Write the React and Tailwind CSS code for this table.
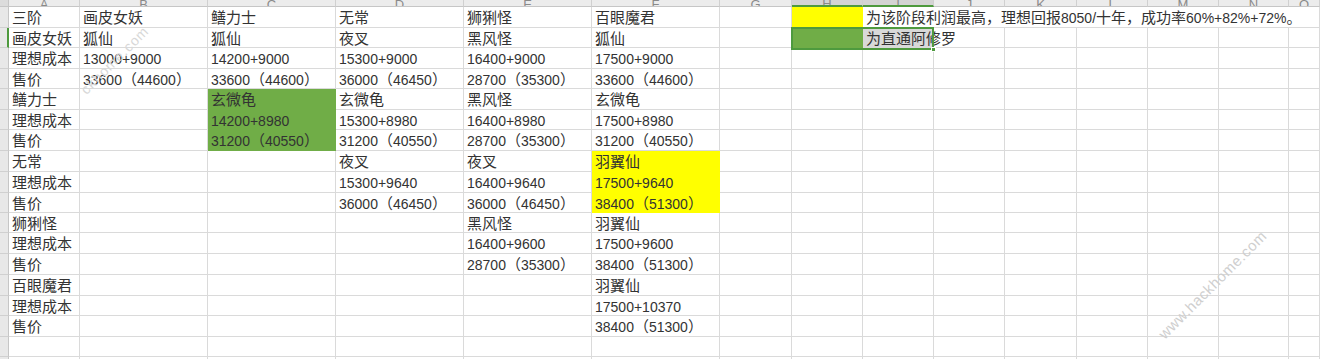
import React from "react";

const FONT = { fontFamily: '"Liberation Sans", "Noto Sans CJK SC", sans-serif' };

const COLS = ["A", "B", "C", "D", "E", "F", "G", "H", "I", "J", "K", "L", "M", "N", "O"];

// rows 1-16, columns A-F
const DATA = [
  ["三阶", "画皮女妖", "鳝力士", "无常", "狮猁怪", "百眼魔君"],
  ["画皮女妖", "狐仙", "狐仙", "夜叉", "黑风怪", "狐仙"],
  ["理想成本", "13000+9000", "14200+9000", "15300+9000", "16400+9000", "17500+9000"],
  ["售价", "33600（44600）", "33600（44600）", "36000（46450）", "28700（35300）", "33600（44600）"],
  ["鳝力士", "", "玄微龟", "玄微龟", "黑风怪", "玄微龟"],
  ["理想成本", "", "14200+8980", "15300+8980", "16400+8980", "17500+8980"],
  ["售价", "", "31200（40550）", "31200（40550）", "28700（35300）", "31200（40550）"],
  ["无常", "", "", "夜叉", "夜叉", "羽翼仙"],
  ["理想成本", "", "", "15300+9640", "16400+9640", "17500+9640"],
  ["售价", "", "", "36000（46450）", "36000（46450）", "38400（51300）"],
  ["狮猁怪", "", "", "", "黑风怪", "羽翼仙"],
  ["理想成本", "", "", "", "16400+9600", "17500+9600"],
  ["售价", "", "", "", "28700（35300）", "38400（51300）"],
  ["百眼魔君", "", "", "", "", "羽翼仙"],
  ["理想成本", "", "", "", "", "17500+10370"],
  ["售价", "", "", "", "", "38400（51300）"],
];

const CJK = /([\u3000-\u303f\u4e00-\u9fff\uff00-\uffef]+)/;

function Txt({ s }) {
  return s.split(CJK).map((p, i) =>
    CJK.test(p) ? (
      <span key={i} className="text-[15px]">{p}</span>
    ) : (
      p
    )
  );
}

function fillFor(r, c) {
  // r: 1-based row, c: 0-based column index (A=0)
  if (c === 2 && r >= 5 && r <= 7) return "bg-[#70ad47] border-[#70ad47]";
  if (c === 5 && r >= 8 && r <= 10) return "bg-[#ffff00] border-[#ffff00]";
  if (c === 7 && r === 1) return "bg-[#ffff00] border-[#ffff00]";
  if (c === 7 && r === 2) return "bg-[#70ad47] border-[#70ad47]";
  if (c === 8 && r === 2) return "bg-[#d9d9d9] border-[#d9d9d9]";
  return "border-[#dadada]";
}

function Cell({ r, c, text, className = "" }) {
  return (
    <div
      className={`flex items-center pt-[3px] pl-[3px] border-r border-b whitespace-nowrap text-[14px] text-[#333] overflow-visible ${fillFor(r, c)} ${className}`}
    >
      {text ? <Txt s={text} /> : null}
    </div>
  );
}

export default function App() {
  const rows = [];
  for (let r = 1; r <= 18; r++) {
    const cells = [];
    cells.push(
      <div
        key="h"
        className={`bg-[#e8e8e8] border-b border-[#d0d0d0] ${r === 2 ? "border-r-2 border-r-[#4e9a3e]" : "border-r border-r-[#c6c6c6]"}`}
      />
    );
    if (r === 1) {
      for (let c = 0; c < 8; c++) cells.push(<Cell key={c} r={r} c={c} text={DATA[0][c] || ""} />);
      cells.push(
        <Cell key="I" r={r} c={8} text="为该阶段利润最高，理想回报8050/十年，成功率60%+82%+72%。" className="col-span-7" />
      );
    } else {
      for (let c = 0; c < 15; c++) {
        let text = "";
        if (r <= 16 && c < 6) text = DATA[r - 1][c];
        if (r === 2 && c === 8) text = "为直通阿修罗";
        cells.push(<Cell key={c} r={r} c={c} text={text} />);
      }
    }
    rows.push(...cells.map((el, i) => React.cloneElement(el, { key: `${r}-${i}` })));
  }

  return (
    <div className="relative w-[1320px] h-[359px] overflow-hidden bg-white" style={FONT}>
      <div className="grid grid-cols-[9px_71px_128px_128px_128px_128px_128px_72px_71px_71px_71px_72px_71px_71px_70px_1fr] grid-rows-[7px_21px_20px_21px_20px_21px_20px_21px_21px_21px_20px_20px_21px_21px_21px_20px_21px_20px_20px]">
        <div className="bg-[#dcdcdc] border-r border-b border-[#c6c6c6]" />
        {COLS.map((l, i) => (
          <div
            key={l}
            className={`flex items-end justify-center overflow-hidden border-r border-[#d0d0d0] text-[13px] leading-none text-[#8a8a8a] ${
              i === 7 || i === 8 ? "bg-[#d4d4d4] border-b-2 border-b-[#4e9a3e]" : "bg-[#ececec] border-b border-b-[#c6c6c6]"
            }`}
          >
            <span className="-mb-[5px]">{l}</span>
          </div>
        ))}
        {rows}
      </div>

      {/* selection H2:I2 */}
      <div className="absolute left-[791px] top-[27px] w-[143px] h-[23px] border-2 border-[#4e9a3e] pointer-events-none" />
      <div className="absolute left-[931px] top-[47px] w-[5px] h-[5px] bg-[#4e9a3e] border border-white pointer-events-none" />

      {/* watermarks */}
      <div className="absolute left-[70px] top-[52px] -rotate-45 text-[14px] leading-[16px] text-[#d8d8d8] pointer-events-none select-none tracking-[1px]">
        ckhome.com
      </div>
      <div className="absolute left-[1140px] top-[274px] -rotate-45 text-[15px] text-[#cfcfcf] pointer-events-none select-none tracking-[0.5px]">
        www.hackhome.com
      </div>
    </div>
  );
}
